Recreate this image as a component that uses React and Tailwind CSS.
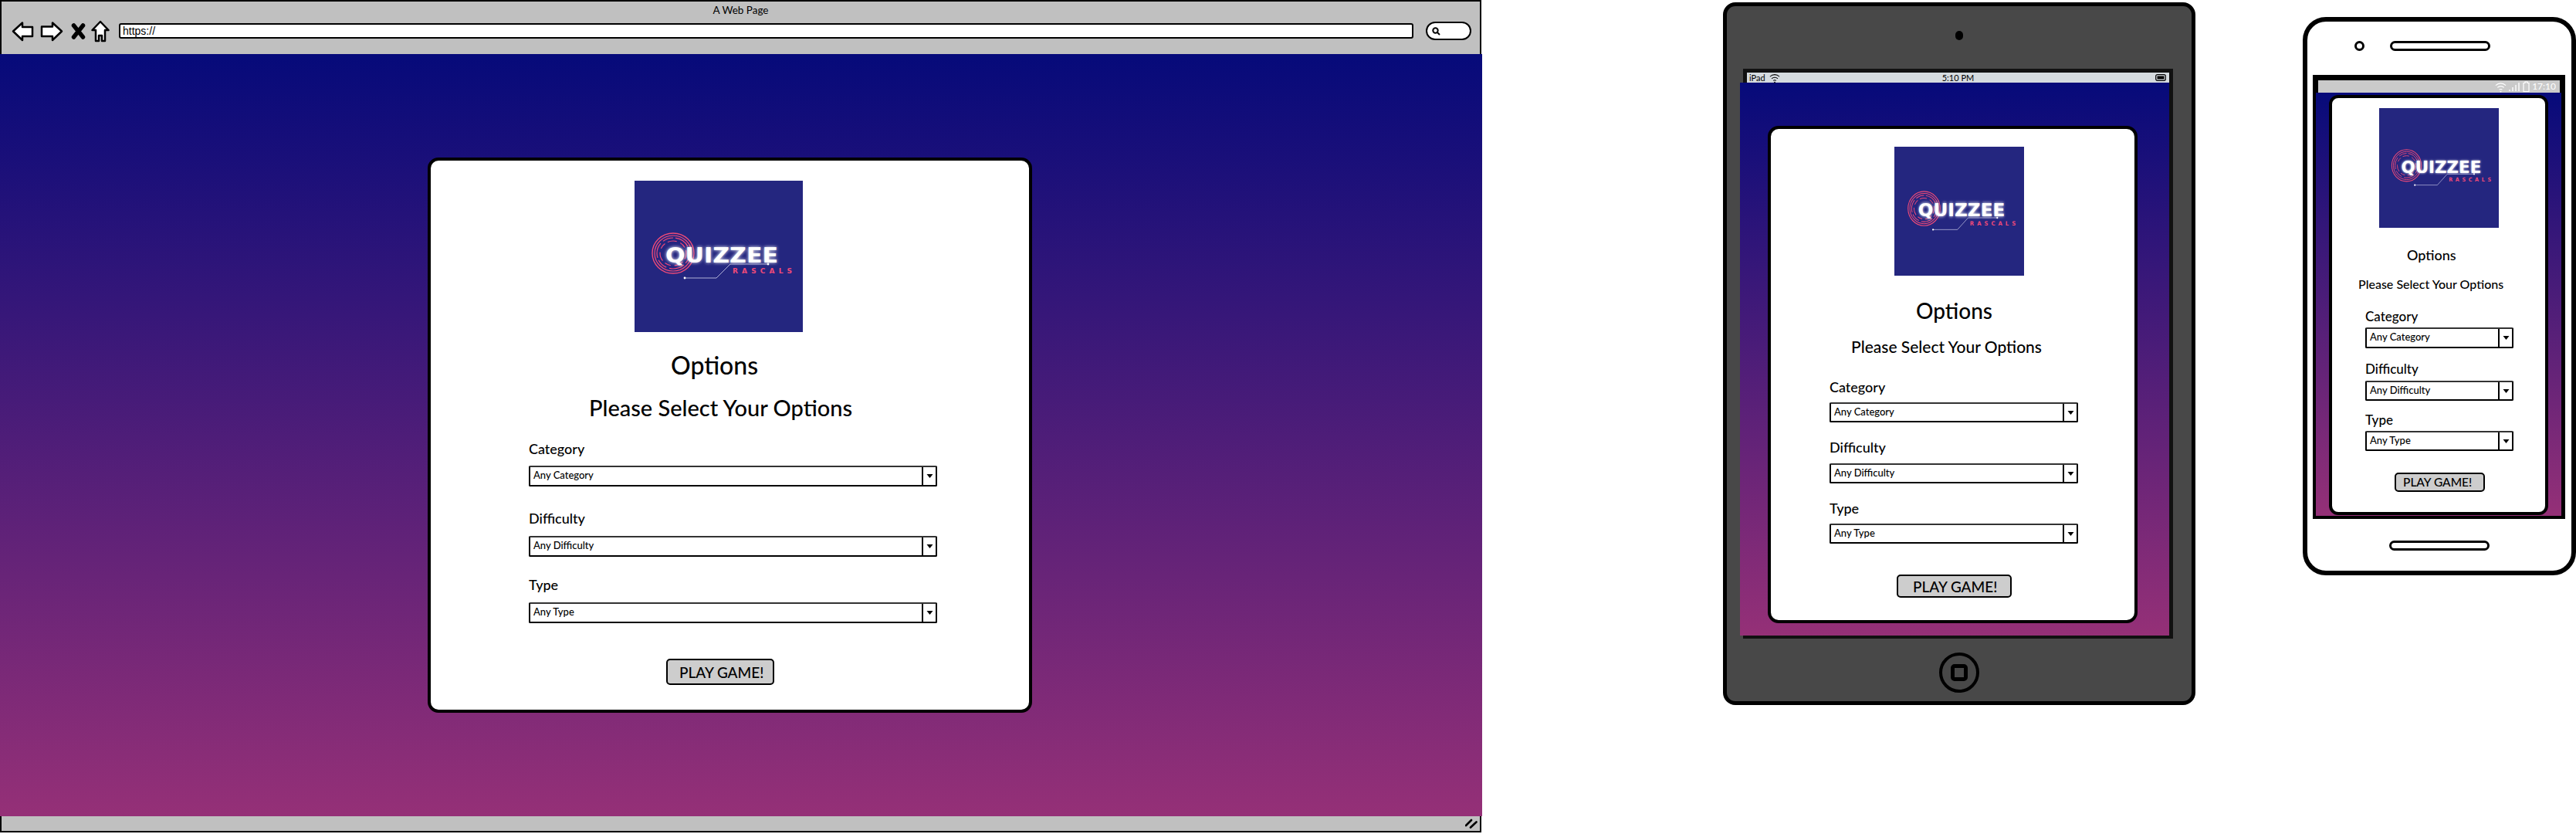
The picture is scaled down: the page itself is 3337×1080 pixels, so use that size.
const GRADIENT = 'bg-[linear-gradient(180deg,#060a7a,#953077)]';

const FIELDS = ['Category', 'Difficulty', 'Type'];

const desktop = {
  card: 'w-[783px] h-[719px] pt-[26px] border-[4px] rounded-[14px]',
  logo: 'ml-[264px] w-[218px] h-[196px]',
  title: 'ml-[311px] mt-[23px] text-[32px] leading-[40px]',
  subtitle: 'ml-[205px] mt-[18px] text-[29px] leading-[34px]',
  label: ['ml-[127px] mt-[25px] text-[18px] leading-[22px]', 'ml-[127px] mt-[30px] text-[18px] leading-[22px]', 'ml-[127px] mt-[25px] text-[18px] leading-[22px]'],
  select: ['ml-[127px] mt-[11px] w-[529px] h-[27px]', 'ml-[127px] mt-[12px] w-[529px] h-[27px]', 'ml-[127px] mt-[12px] w-[529px] h-[27px]'],
  button: 'ml-[305px] mt-[46px] w-[140px] h-[34px] pl-[15px] text-[19px]',
};

const tablet = {
  card: 'w-[479px] h-[644px] pt-[23px] border-[4px] rounded-[14px]',
  logo: 'ml-[160px] w-[168px] h-[167px]',
  title: 'ml-[188px] mt-[27px] text-[28px] leading-[36px]',
  subtitle: 'ml-[104px] mt-[16px] text-[21px] leading-[26px]',
  label: ['ml-[76px] mt-[28px] text-[18px] leading-[22px]', 'ml-[76px] mt-[21px] text-[18px] leading-[22px]', 'ml-[76px] mt-[21px] text-[18px] leading-[22px]'],
  select: ['ml-[76px] mt-[9px] w-[322px] h-[26px]', 'ml-[76px] mt-[10px] w-[322px] h-[26px]', 'ml-[76px] mt-[9px] w-[322px] h-[26px]'],
  button: 'ml-[163px] mt-[40px] w-[149px] h-[30px] pl-[19px] text-[19px]',
};

const phone = {
  card: 'w-[284px] h-[544px] pt-[13px] border-[4px] rounded-[12px]',
  logo: 'ml-[61px] w-[155px] h-[155px]',
  title: 'ml-[97px] mt-[23px] text-[18px] leading-[24px]',
  subtitle: 'ml-[34px] mt-[15px] text-[16px] leading-[22px]',
  label: ['ml-[43px] mt-[21px] text-[17px] leading-[20px]', 'ml-[43px] mt-[17px] text-[17px] leading-[20px]', 'ml-[43px] mt-[15px] text-[17px] leading-[20px]'],
  select: ['ml-[43px] mt-[4px] w-[192px] h-[27px]', 'ml-[43px] mt-[5px] w-[192px] h-[26px]', 'ml-[43px] mt-[4px] w-[192px] h-[26px]'],
  button: 'ml-[81px] mt-[28px] w-[117px] h-[25px] pl-[9px] text-[15.5px]',
};

function Logo({ className }) {
  return (
    <svg viewBox="0 0 218 196" preserveAspectRatio="none" className={`block shrink-0 ${className}`}>
      <defs>
        <filter id="glow" x="-20%" y="-60%" width="140%" height="220%">
          <feGaussianBlur stdDeviation="2.2" />
        </filter>
      </defs>
      <rect width="218" height="196" fill="#24267f" />
      <g fill="none" stroke="#ef4a78">
        <ellipse cx="50" cy="94" rx="27" ry="26" strokeWidth="1.4" />
        <ellipse cx="50" cy="94" rx="24" ry="23" strokeWidth="1.2" />
        <ellipse cx="50" cy="94" rx="21" ry="20" strokeWidth="1.2" strokeDasharray="14 3 20 4" />
        <ellipse cx="50" cy="94" rx="17" ry="16" strokeWidth="1.2" strokeDasharray="8 4 12 5" />
      </g>
      <g fontFamily="'DejaVu Sans', sans-serif" fontWeight="700" fontSize="27">
        <text x="40" y="106" textLength="146" lengthAdjust="spacingAndGlyphs" fill="#fff" filter="url(#glow)">QUIZZEE</text>
        <text x="40" y="106" textLength="146" lengthAdjust="spacingAndGlyphs" fill="#fff">QUIZZEE</text>
      </g>
      <text x="127" y="120" textLength="77" fontFamily="'DejaVu Sans', sans-serif" fontWeight="700" fontSize="9" fill="#f04a78">RASCALS</text>
      <path d="M65 126H106L124 108H173" fill="none" stroke="#d5d5ee" strokeWidth="0.8" />
      <circle cx="65" cy="126" r="1.4" fill="#fff" />
      <circle cx="173" cy="108" r="1.4" fill="#fff" />
    </svg>
  );
}

function SelectBox({ value, className }) {
  return (
    <div className={`flex shrink-0 items-stretch border-2 border-black border-t-[#333] rounded-[2px] bg-white ${className}`}>
      <span className="flex-1 pl-[4px] text-[13px] leading-[21px]">{value}</span>
      <span className="flex w-[18px] items-center justify-center border-l-2 border-black">
        <svg width="9" height="7" viewBox="0 0 9 7"><path d="M0.5 1H8.5L4.5 6Z" fill="#000" /></svg>
      </span>
    </div>
  );
}

function OptionsCard({ size }) {
  return (
    <div className={`flex shrink-0 flex-col border-black bg-white font-medium text-black ${size.card}`}>
      <Logo className={size.logo} />
      <h1 className={size.title}>Options</h1>
      <h2 className={size.subtitle}>Please Select Your Options</h2>
      {FIELDS.map((field, i) => (
        <div key={field} className="contents">
          <label className={size.label[i]}>{field}</label>
          <SelectBox value={`Any ${field}`} className={size.select[i]} />
        </div>
      ))}
      <button className={`block shrink-0 border-2 border-black rounded-[5px] bg-[#cdcdcd] text-left leading-none ${size.button}`}>PLAY GAME!</button>
    </div>
  );
}

function BrowserToolbar() {
  return (
    <div className="h-[70px] w-[1919px] shrink-0 border-x-2 border-t-2 border-black bg-[#c0c0c0]">
      <div className="h-[22px] text-center text-[13.5px] leading-[22px] text-black">A Web Page</div>
      <div className="flex h-[26px] mt-[3px] items-center">
        <svg className="ml-[13px]" width="29" height="27" viewBox="0 0 29 27">
          <path d="M2 13.5L14 2.5V8H27V20H14V25Z" fill="#fff" stroke="#000" strokeWidth="2.5" strokeLinejoin="round" />
        </svg>
        <svg className="ml-[8px]" width="30" height="27" viewBox="0 0 30 27">
          <path d="M28 13.5L16 2.5V7.5H2V20H16V25Z" fill="#fff" stroke="#000" strokeWidth="2.5" strokeLinejoin="round" />
        </svg>
        <svg className="ml-[10px]" width="19" height="21" viewBox="0 0 19 21">
          <path d="M3.5 3L15.5 18M15.5 3L3.5 18" stroke="#000" strokeWidth="5.5" strokeLinecap="round" />
        </svg>
        <svg className="ml-[7px]" width="24" height="29" viewBox="0 0 24 29">
          <path d="M12 2L22.5 13H18V27H14V20H10V27H6V13H1.5Z" fill="#fff" stroke="#000" strokeWidth="2.5" strokeLinejoin="round" />
        </svg>
        <div className="ml-[12px] h-[20px] w-[1677px] rounded-[3px] border-2 border-black bg-white pl-[3px] font-['Liberation_Sans',sans-serif] text-[14px] leading-[17px] text-black">https://</div>
        <div className="ml-[16px] flex h-[24px] w-[59px] items-center rounded-[12px] border-2 border-black bg-white pl-[6px]">
          <svg width="11" height="11" viewBox="0 0 11 11">
            <circle cx="4.5" cy="4.5" r="3.2" fill="none" stroke="#000" strokeWidth="2" />
            <path d="M7 7L10 10" stroke="#000" strokeWidth="2" />
          </svg>
        </div>
      </div>
    </div>
  );
}

function Browser() {
  return (
    <div className="flex h-[1078px] w-[1920px] shrink-0 flex-col">
      <BrowserToolbar />
      <div className={`h-[987px] pl-[554px] pt-[134px] ${GRADIENT}`}>
        <OptionsCard size={desktop} />
      </div>
      <div className="flex h-[21px] w-[1919px] items-center justify-end border-x-2 border-b-2 border-black bg-[#c0c0c0] pr-[3px]">
        <svg width="16" height="13" viewBox="0 0 16 13">
          <path d="M1 9L8 2M7 11.5L14.5 4.5" stroke="#000" strokeWidth="2.6" strokeLinecap="round" />
        </svg>
      </div>
    </div>
  );
}

function WifiIcon({ color, size }) {
  return (
    <svg width={size} height={size} viewBox="0 0 16 16" fill="none" stroke={color} strokeWidth="1.2">
      <path d="M1 6C5 2 11 2 15 6M3.5 9C6 6.5 10 6.5 12.5 9M6 12C7 11 9 11 10 12" />
      <circle cx="8" cy="14.5" r="1" fill={color} stroke="none" />
    </svg>
  );
}

function Tablet() {
  return (
    <div className="ml-[312px] mt-[3px] flex h-[910px] w-[612px] shrink-0 flex-col rounded-[16px] border-[5px] border-black bg-[#484848]">
      <div className="mx-auto mt-[32px] h-[12px] w-[10px] shrink-0 rounded-full bg-black" />
      <div className="ml-[21px] mt-[37px] h-[738px] w-[557px] shrink-0 border-[5px] border-[#111]">
        <div className="flex h-[13px] items-center justify-between bg-[#d5dbdf] px-[3px] text-[11px] leading-[13px] text-black">
          <div className="flex w-[60px] items-center gap-[5px]">
            iPad
            <WifiIcon color="#000" size={14} />
          </div>
          <span>5:10 PM</span>
          <div className="flex w-[60px] justify-end">
            <svg width="15" height="9" viewBox="0 0 15 9">
              <rect x="0.7" y="0.7" width="12.6" height="7.6" rx="2" fill="none" stroke="#000" strokeWidth="1.2" />
              <rect x="2.5" y="2.5" width="9" height="4" fill="#000" />
            </svg>
          </div>
        </div>
        <div className={`-ml-[9px] h-[716px] w-[556px] pl-[36px] pt-[56px] ${GRADIENT}`}>
          <OptionsCard size={tablet} />
        </div>
      </div>
      <div className="mx-auto mt-[18px] flex h-[52px] w-[52px] shrink-0 items-center justify-center rounded-full border-[4px] border-black">
        <div className="h-[22px] w-[22px] rounded-[5px] border-[5px] border-black" />
      </div>
    </div>
  );
}

function Phone() {
  return (
    <div className="ml-[139px] mt-[22px] flex h-[723px] w-[354px] shrink-0 flex-col rounded-[30px] border-[6px] border-black bg-white">
      <div className="ml-[61px] mt-[25px] flex h-[13px] shrink-0 items-center">
        <div className="h-[13px] w-[13px] rounded-full border-[3px] border-black" />
        <div className="ml-[33px] h-[13px] w-[130px] rounded-full border-[3px] border-black" />
      </div>
      <div className="ml-[7px] mt-[31px] h-[575px] w-[327px] shrink-0 border-[7px] border-black">
        <div className="flex h-[16px] items-center justify-end gap-[3px] bg-[#cacaca] pr-[5px] text-[12px] leading-[16px] text-white">
          <WifiIcon color="#fff" size={15} />
          <svg width="15" height="12" viewBox="0 0 15 12">
            <path d="M1 12V10M5 12V7M9 12V4M13 12V1" stroke="#fff" strokeWidth="1.4" />
          </svg>
          <svg width="9" height="14" viewBox="0 0 9 14">
            <path d="M1 2.5H3V1H6V2.5H8V13.5H1Z" fill="none" stroke="#fff" strokeWidth="1.2" />
          </svg>
          <span>17:10</span>
        </div>
        <div className={`-ml-[3px] h-[548px] w-[318px] pl-[17px] pt-[3px] ${GRADIENT}`}>
          <OptionsCard size={phone} />
        </div>
      </div>
      <div className="ml-[106px] mt-[28px] h-[13px] w-[130px] shrink-0 rounded-full border-[3px] border-black" />
    </div>
  );
}

export default function App() {
  return (
    <div className="flex h-[1080px] w-[3337px] items-start overflow-hidden bg-white font-['Lato',sans-serif]">
      <Browser />
      <Tablet />
      <Phone />
    </div>
  );
}
